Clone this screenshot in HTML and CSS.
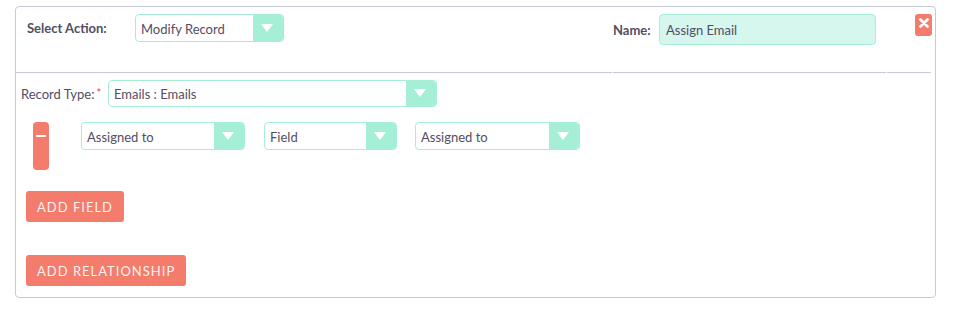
FILE: index.html
```html
<!DOCTYPE html>
<html>
<head>
<meta charset="utf-8">
<link rel="stylesheet" href="styles.css">
</head>
<body>
<div class="panel">
  <div class="head">
    <div class="cell c1">
      <span class="hlabel">Select Action:</span>
      <div class="sel sel-action"><span class="val">Modify Record</span><span class="arrow"></span></div>
    </div>
    <div class="cell c2">
      <span class="hlabel name">Name:</span>
      <div class="name-input">Assign Email</div>
    </div>
    <div class="cell c3">
      <span class="close"><svg width="10" height="10" viewBox="0 0 10 10"><path d="M1.5 1.5 L8.5 8.5 M8.5 1.5 L1.5 8.5" stroke="#fff" stroke-width="2.8" stroke-linecap="round"/></svg></span>
    </div>
  </div>
  <div class="body">
    <div class="rt-row">
      <span class="rlabel">Record Type:<span class="req">*</span></span>
      <div class="sel sel-rt"><span class="val">Emails : Emails</span><span class="arrow"></span></div>
    </div>
    <div class="field-row">
      <span class="minus"><span class="bar"></span></span>
      <div class="sel sel-f1"><span class="val">Assigned to</span><span class="arrow"></span></div>
      <div class="sel sel-f2"><span class="val">Field</span><span class="arrow"></span></div>
      <div class="sel sel-f3"><span class="val">Assigned to</span><span class="arrow"></span></div>
    </div>
    <button class="btn btn-field">ADD FIELD</button>
    <button class="btn btn-rel">ADD RELATIONSHIP</button>
  </div>
</div>
</body>
</html>
```
FILE: styles.css
```css
* { box-sizing: border-box; }
html, body { margin: 0; padding: 0; background: #fff; }
body {
  font-family: Lato, "Open Sans", sans-serif;
  font-size: 13px;
  color: #534d64;
}
.panel {
  margin: 6px 0 0 15px;
  width: 921px;
  height: 292px;
  border: 1px solid #c5cad4;
  border-radius: 4px;
}
.head {
  display: flex;
  gap: 1px;
  height: 66px;
}
.cell {
  border-bottom: 1px solid #c5cad4;
  display: flex;
  align-items: flex-start;
  padding-top: 7px;
}
.c1 { width: 596px; padding-left: 11px; }
.c2 { width: 273px; }
.c3 { width: 44px; justify-content: flex-end; margin-right: 2px; }
.hlabel {
  font-weight: bold;
  line-height: 29px;
  width: 108px;
  flex: none;
}
.hlabel.name { width: 46px; line-height: 32px; }
.sel {
  display: flex;
  border: 1px solid #a5efd6;
  border-radius: 4px;
  background: #fff;
  height: 28px;
  overflow: hidden;
  flex: none;
}
.sel .val {
  flex: 1;
  padding-left: 5px;
  line-height: 28px;
  white-space: nowrap;
}
.sel .arrow {
  width: 30px;
  background: #a5efd6;
  position: relative;
}
.sel .arrow::after {
  content: "";
  position: absolute;
  left: 8px;
  top: 9px;
  border-left: 6px solid transparent;
  border-right: 6px solid transparent;
  border-top: 8px solid #fff;
}
.sel-action { width: 149px; }
.name-input {
  width: 217px;
  height: 31px;
  background: #d6f7ee;
  border: 1px solid #a5efd6;
  border-radius: 4px;
  line-height: 31px;
  padding-left: 6px;
}
.close {
  width: 17px;
  height: 22px;
  background: #f37c6c;
  border-radius: 3px;
  display: flex;
  justify-content: center;
  padding-top: 4px;
  margin-right: -1px;
}
.close svg { display: block; }
.body {
  padding: 7px 0 0 5px;
}
.rt-row {
  display: flex;
  align-items: center;
}
.rlabel { width: 87px; flex: none; padding-top: 1px; }
.req { color: #e23b3b; font-size: 11px; vertical-align: top; margin-left: 2px; }
.sel-rt { width: 329px; height: 27px; }
.sel-rt .val { line-height: 27px; }
.sel-rt .arrow::after { top: 8px; }
.field-row {
  display: flex;
  align-items: flex-start;
  margin-top: 15px;
  padding-left: 12px;
}
.minus {
  width: 16px;
  height: 48px;
  background: #f37c6c;
  border-radius: 4px;
  margin-right: 32px;
  display: flex;
  justify-content: center;
  padding-top: 13px;
  flex: none;
}
.minus .bar { width: 10px; height: 2px; background: #fff; border-radius: 1px; }
.sel-f1 { width: 164px; margin-right: 19px; }
.sel-f2 { width: 133px; margin-right: 18px; }
.sel-f3 { width: 165px; }
.btn {
  display: block;
  border: none;
  background: #f37c6c;
  color: #fdf0f0;
  font-family: Lato, "Open Sans", sans-serif;
  font-size: 13px;
  letter-spacing: 1px;
  height: 31px;
  padding: 0 11px;
  border-radius: 3px;
  margin-left: 5px;
  white-space: nowrap;
}
.btn-field { margin-top: 21px; }
.btn-rel { margin-top: 33px; }
```
